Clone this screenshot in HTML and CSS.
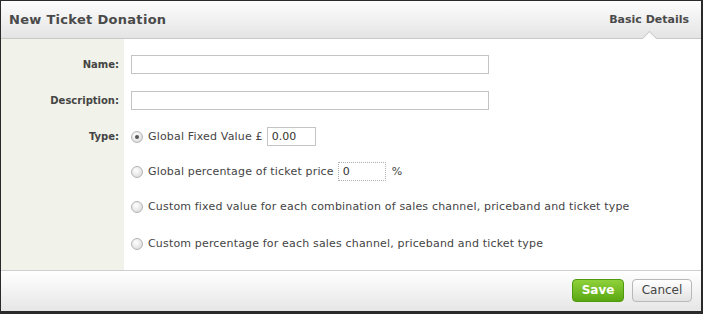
FILE: index.html
```html
<!DOCTYPE html>
<html lang="en">
<head>
    <meta charset="UTF-8">
    <title>New Ticket Donation</title>
    <link rel="stylesheet" href="styles.css">
</head>
<body>

<div class="dialog">
    <!--header-->
    <div class="header">
        <h1 class="title">New Ticket Donation</h1>
        <span class="tab">Basic Details</span>
    </div>

    <!--form-->
    <div class="body">
        <div class="row">
            <label class="label">Name:</label>
            <div class="field"><input type="text" class="text wide"></div>
        </div>
        <div class="row">
            <label class="label">Description:</label>
            <div class="field"><input type="text" class="text wide"></div>
        </div>
        <div class="row type-row">
            <label class="label">Type:</label>
            <div class="field options">
                <div class="option">
                    <span class="radio checked"></span>
                    <span>Global Fixed Value &pound;</span>
                    <input type="text" class="text small" value="0.00">
                </div>
                <div class="option">
                    <span class="radio"></span>
                    <span>Global percentage of ticket price</span>
                    <input type="text" class="text small dotted" value="0">
                    <span class="pct">%</span>
                </div>
                <div class="option">
                    <span class="radio"></span>
                    <span>Custom fixed value for each combination of sales channel, priceband and ticket type</span>
                </div>
                <div class="option last">
                    <span class="radio"></span>
                    <span>Custom percentage for each sales channel, priceband and ticket type</span>
                </div>
            </div>
        </div>
    </div>

    <!--footer-->
    <div class="footer">
        <button class="btn save">Save</button>
        <button class="btn cancel">Cancel</button>
    </div>
</div>

</body>
</html>
```

FILE: styles.css
```css
* {
    margin: 0;
    padding: 0;
    box-sizing: border-box;
}

body {
    background-color: #333;
    font-family: "DejaVu Sans", Verdana, sans-serif;
    font-size: 11px;
    color: #444;
}

.dialog {
    width: 703px;
    height: 314px;
    border-top: 1px solid #2a2a2a;
    border-left: 1px solid #2a2a2a;
    border-right: 2px solid #2a2a2a;
    border-bottom: 3px solid #2a2a2a;
    background-color: #fff;
    display: flex;
    flex-direction: column;
}

.header {
    height: 38px;
    position: relative;
    display: flex;
    justify-content: space-between;
    align-items: center;
    padding: 0 12px 1px 8px;
    background: linear-gradient(#fdfdfd, #e4e4e4);
    border-bottom: 1px solid #c8c8c8;
}

.title {
    font-size: 13px;
    font-weight: bold;
    letter-spacing: 0.3px;
    color: #4a4a4a;
}

.tab {
    font-size: 11px;
    font-weight: bold;
    color: #4a4a4a;
}

/*little notch under the tab*/
.tab::after {
    content: "";
    position: absolute;
    right: 46px;
    bottom: -1px;
    width: 10px;
    height: 10px;
    background-color: #fff;
    border-top: 1px solid #c8c8c8;
    border-left: 1px solid #c8c8c8;
    transform: translateY(5px) rotate(45deg);
}

.body {
    flex: 1;
    background: linear-gradient(to right, #f1f3ea 123px, #fff 123px);
    border-bottom: 1px solid #cfcfcf;
    padding-top: 16px;
}

.row {
    display: grid;
    grid-template-columns: 123px 1fr;
    align-items: center;
    margin-bottom: 17px;
}

.type-row {
    align-items: start;
    margin-bottom: 0;
}

.label {
    text-align: right;
    padding-right: 5px;
    font-size: 10px;
    font-weight: bold;
    color: #444;
}

.type-row .label {
    line-height: 19px;
}

.field {
    padding-left: 7px;
}

.text {
    height: 19px;
    border: 1px solid #c4c4c4;
    font-family: inherit;
    font-size: 11px;
    color: #333;
    padding: 0 4px;
    outline: none;
}

.wide {
    width: 358px;
}

.small {
    width: 49px;
    margin-left: 4px;
}

.dotted {
    border: 1px dotted #b0b0b0;
    width: 48px;
    margin-left: 4px;
}

.options {
    display: flex;
    flex-direction: column;
    gap: 16px;
}

.option {
    display: flex;
    align-items: center;
    height: 19px;
    letter-spacing: 0.17px;
}

.option.last {
    margin-top: 2px;
}

.radio {
    width: 12px;
    height: 12px;
    border-radius: 50%;
    border: 1px solid #b4b4b4;
    background: radial-gradient(circle at 40% 35%, #ffffff, #d4d4d4);
    margin-right: 5px;
    position: relative;
}

.radio.checked::after {
    content: "";
    position: absolute;
    left: 3px;
    top: 3px;
    width: 4px;
    height: 4px;
    border-radius: 50%;
    background-color: #555;
}

.pct {
    margin-left: 6px;
}

.footer {
    height: 40px;
    display: flex;
    justify-content: flex-end;
    align-items: center;
    gap: 8px;
    padding: 0 9px 2px 0;
    background: linear-gradient(#ffffff, #e6e6e6);
}

.btn {
    height: 23px;
    border-radius: 4px;
    font-family: inherit;
    font-size: 12px;
}

.save {
    width: 52px;
    font-weight: bold;
    color: #fff;
    border: 1px solid #4e9a0c;
    background: linear-gradient(#8fd13a, #5aa712);
}

.cancel {
    width: 60px;
    color: #444;
    border: 1px solid #b8b8b8;
    background: linear-gradient(#ffffff, #e2e2e2);
}
```
